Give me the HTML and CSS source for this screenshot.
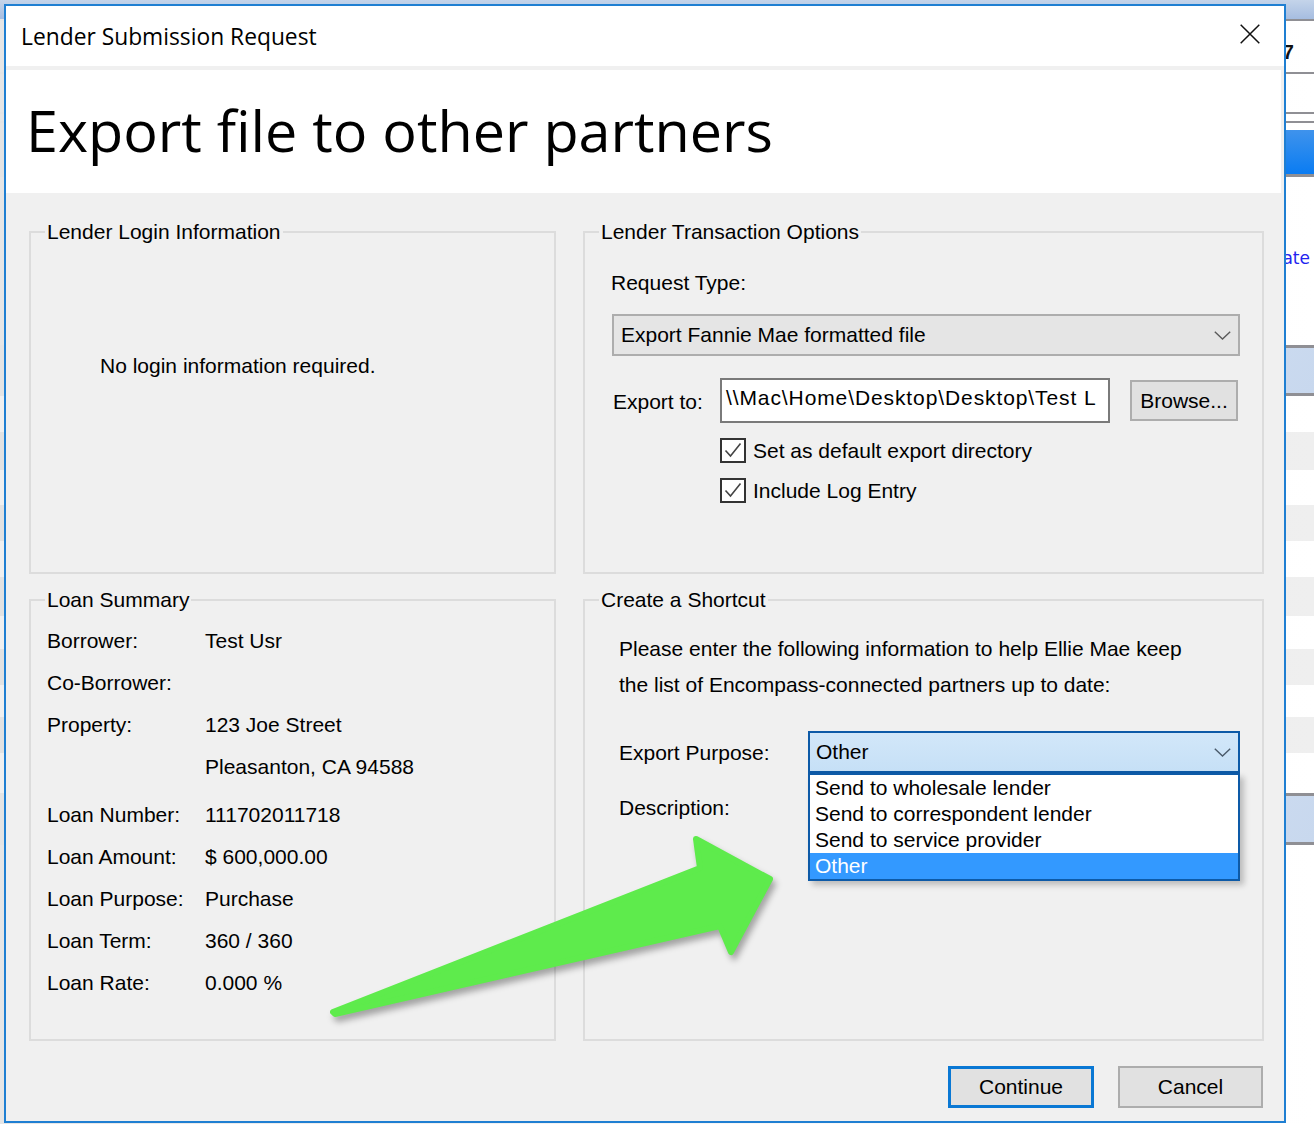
FILE: index.html
```html
<!DOCTYPE html>
<html lang="en">
<head>
<meta charset="utf-8">
<title>Lender Submission Request</title>
<link rel="stylesheet" href="styles.css">
</head>
<body>
<div class="desktop">
  <div class="st st-top"></div>
  <div class="st st-line h2"></div>
  <div class="st st-light h51 st-text-a"><span class="bg-num">2017</span></div>
  <div class="st st-line h2"></div>
  <div class="st st-light h38"></div>
  <div class="st st-line h2"></div>
  <div class="st st-light h7"></div>
  <div class="st st-line h2"></div>
  <div class="st st-light h7"></div>
  <div class="st st-blue h44"></div>
  <div class="st st-line h3"></div>
  <div class="st st-light h168 st-text-b"><span class="bg-link">Update</span></div>
  <div class="st st-line h3"></div>
  <div class="st st-lblue h45"></div>
  <div class="st st-line h3"></div>
  <div class="st st-w h36"></div>
  <div class="st st-g h38"></div>
  <div class="st st-w h35"></div>
  <div class="st st-g h36"></div>
  <div class="st st-w h36"></div>
  <div class="st st-g h39"></div>
  <div class="st st-w h33"></div>
  <div class="st st-g h36"></div>
  <div class="st st-w h32"></div>
  <div class="st st-g h36"></div>
  <div class="st st-w h40"></div>
  <div class="st st-line h3"></div>
  <div class="st st-lblue h46"></div>
  <div class="st st-line h3"></div>
  <div class="st st-light st-fill"></div>
</div>

<div class="dialog">
  <div class="titlebar">
    <span class="title-text">Lender Submission Request</span>
    <svg class="close" width="20" height="20" viewBox="0 0 20 20"><path d="M0.7 0.7 L19.3 19.3 M19.3 0.7 L0.7 19.3" stroke="#111" stroke-width="1.5" fill="none"/></svg>
  </div>
  <div class="header">Export file to other partners</div>

  <div class="content">
    <div class="groups">
      <fieldset class="group row1">
        <legend>Lender Login Information</legend>
        <div class="nologin">No login information required.</div>
      </fieldset>

      <fieldset class="group row1">
        <legend>Lender Transaction Options</legend>
        <div class="req-label">Request Type:</div>
        <div class="select-req">
          <span>Export Fannie Mae formatted file</span>
          <svg class="chev" width="17" height="9" viewBox="0 0 17 9"><path d="M0.8 0.8 L8.5 8 L16.2 0.8" stroke="#5a5a5a" stroke-width="1.4" fill="none"/></svg>
        </div>
        <div class="export-row">
          <span class="export-label">Export to:</span>
          <div class="textbox">\\Mac\Home\Desktop\Desktop\Test L</div>
          <div class="btn browse">Browse...</div>
        </div>
        <div class="check-row">
          <span class="checkbox"><svg width="22" height="21" viewBox="0 0 22 21"><path d="M3.5 10.5 L8.5 16 L18.5 3.5" stroke="#444" stroke-width="1.6" fill="none"/></svg></span>
          <span>Set as default export directory</span>
        </div>
        <div class="check-row">
          <span class="checkbox"><svg width="22" height="21" viewBox="0 0 22 21"><path d="M3.5 10.5 L8.5 16 L18.5 3.5" stroke="#444" stroke-width="1.6" fill="none"/></svg></span>
          <span>Include Log Entry</span>
        </div>
      </fieldset>

      <fieldset class="group row2">
        <legend>Loan Summary</legend>
        <div class="summary">
          <div class="k">Borrower:</div><div class="v">Test Usr</div>
          <div class="k">Co-Borrower:</div><div class="v"></div>
          <div class="k">Property:</div><div class="v">123 Joe Street</div>
          <div class="k"></div><div class="v">Pleasanton, CA 94588</div>
          <div class="k sp">Loan Number:</div><div class="v sp">111702011718</div>
          <div class="k">Loan Amount:</div><div class="v">$ 600,000.00</div>
          <div class="k">Loan Purpose:</div><div class="v">Purchase</div>
          <div class="k">Loan Term:</div><div class="v">360 / 360</div>
          <div class="k">Loan Rate:</div><div class="v">0.000 %</div>
        </div>
      </fieldset>

      <fieldset class="group row2">
        <legend>Create a Shortcut</legend>
        <div class="intro">Please enter the following information to help Ellie Mae keep<br>the list of Encompass-connected partners up to date:</div>
        <div class="purpose-row">
          <span class="purpose-label">Export Purpose:</span>
          <div class="combo">
            <div class="combo-box">
              <span>Other</span>
              <svg class="chev" width="17" height="9" viewBox="0 0 17 9"><path d="M0.8 0.8 L8.5 8 L16.2 0.8" stroke="#4a5a6a" stroke-width="1.4" fill="none"/></svg>
            </div>
            <ul class="combo-list">
              <li>Send to wholesale lender</li>
              <li>Send to correspondent lender</li>
              <li>Send to service provider</li>
              <li class="selected">Other</li>
            </ul>
          </div>
        </div>
        <div class="desc-label">Description:</div>
      </fieldset>
    </div>

    <div class="buttons">
      <div class="btn btn-primary">Continue</div>
      <div class="btn btn-cancel">Cancel</div>
    </div>
  </div>
</div>

<svg class="arrow" width="1314" height="1124" viewBox="0 0 1314 1124">
  <polygon points="333,1012 700,868 696,839 770,879 731,952 720,926 335,1014" fill="#5eeb4c" stroke="#5eeb4c" stroke-width="6" stroke-linejoin="round"/>
</svg>
</body>
</html>
```

FILE: styles.css
```css
html, body {
  margin: 0;
  padding: 0;
}

body {
  width: 1314px;
  height: 1124px;
  overflow: hidden;
  position: relative;
  font-family: "Liberation Sans", Arial, sans-serif;
  font-size: 21px;
  color: #000;
  background: #eeeeee;
}

/* background application behind the dialog */
.desktop {
  display: flex;
  flex-direction: column;
  height: 1124px;
}

.st { flex: none; }
.st-fill { flex: 1; }
.h2 { height: 2px; }
.h3 { height: 3px; }
.h7 { height: 7px; }
.h32 { height: 32px; }
.h33 { height: 33px; }
.h35 { height: 35px; }
.h36 { height: 36px; }
.h38 { height: 38px; }
.h39 { height: 39px; }
.h40 { height: 40px; }
.h44 { height: 44px; }
.h45 { height: 45px; }
.h46 { height: 46px; }
.h51 { height: 51px; }
.h168 { height: 168px; }

.st-top {
  height: 19px;
  background: linear-gradient(#c4d4ea, #a6bde0);
}
.st-line {
  background:
    linear-gradient(to right, #e4e4e4 0, #e4e4e4 12px, transparent 12px),
    #8f8f94;
}
.st-light { background: linear-gradient(to right, #e6e6e6, #f8f8f8 60%, #ffffff); }
.st-w { background: linear-gradient(to right, #f0f0f0, #ffffff); }
.st-g { background: linear-gradient(to right, #e2e2e2, #efefef); }
.st-blue {
  background:
    linear-gradient(to right, #e4e4e4 0, #e4e4e4 12px, transparent 12px),
    linear-gradient(#3f93ec, #0a7cf2);
}
.st-lblue {
  background:
    linear-gradient(to right, #e4e4e4 0, #e4e4e4 12px, transparent 12px),
    linear-gradient(135deg, #eef4fd, #c8d8ee);
}

.st-text-a {
  box-sizing: border-box;
  display: flex;
  justify-content: flex-end;
  align-items: center;
  padding: 12px 20px 0 0;
}
.bg-num {
  font-weight: bold;
  font-size: 20px;
  color: #111;
}
.st-text-b {
  box-sizing: border-box;
  display: flex;
  justify-content: flex-end;
  align-items: flex-start;
  padding: 70px 4px 0 0;
}
.bg-link {
  font-family: "DejaVu Sans", sans-serif;
  font-size: 17px;
  line-height: 22px;
  color: #2323f0;
}

/* dialog window */
.dialog {
  position: absolute;
  left: 4px;
  top: 4px;
  width: 1282px;
  height: 1119px;
  box-sizing: border-box;
  border: 2px solid #1f7fd2;
  background: #f0f0f0;
  display: flex;
  flex-direction: column;
}

.titlebar {
  height: 60px;
  flex: none;
  background: #ffffff;
  display: flex;
  align-items: center;
  justify-content: space-between;
  padding: 0 24px 0 15px;
}
.title-text {
  font-family: "Open Sans", "Noto Sans", sans-serif;
  font-size: 22.8px;
  color: #000;
}
.close { display: block; margin-top: -4px; }

.header {
  flex: none;
  height: 123px;
  box-sizing: border-box;
  margin: 4px 3px 0 0;
  padding: 22px 0 0 20px;
  background: #ffffff;
  font-family: "Open Sans", "Noto Sans", sans-serif;
  font-size: 57.5px;
  line-height: 76px;
  white-space: nowrap;
}

.content {
  padding: 27px 20px 0 23px;
}

.groups {
  display: grid;
  grid-template-columns: 527px 681px;
  column-gap: 27px;
  row-gap: 14px;
}

.group {
  margin: 0;
  min-width: 0;
  box-sizing: border-box;
  border: 2px solid #dcdcdc;
  padding: 0 10px 0 16px;
  line-height: 24px;
}
.group legend {
  padding: 0 2px;
  margin-left: -2px;
  line-height: 24px;
}
.row1 { height: 354px; }
.row2 { height: 453px; }

.nologin {
  margin: 110px 0 0 53px;
}

.req-label {
  margin: 27px 0 0 10px;
}

.select-req {
  margin: 19px 0 0 11px;
  width: 628px;
  height: 42px;
  box-sizing: border-box;
  border: 2px solid #adadad;
  background: #e5e5e5;
  display: flex;
  align-items: center;
  justify-content: space-between;
  padding: 0 7px 0 7px;
}
.chev { display: block; }

.export-row {
  display: flex;
  align-items: center;
  height: 45px;
  margin-top: 22px;
}
.export-label {
  width: 107px;
  margin-left: 12px;
  padding-top: 2px;
}
.textbox {
  width: 390px;
  height: 45px;
  box-sizing: border-box;
  border: 2px solid #7a7a7a;
  background: #ffffff;
  padding: 6px 0 0 4px;
  white-space: nowrap;
  overflow: hidden;
  letter-spacing: 0.9px;
}

.btn {
  box-sizing: border-box;
  background: #e1e1e1;
  display: flex;
  align-items: center;
  justify-content: center;
}
.browse {
  margin-left: 20px;
  width: 108px;
  height: 41px;
  border: 2px solid #adadad;
}

.check-row {
  display: flex;
  align-items: center;
  gap: 7px;
  height: 25px;
  margin: 15px 0 0 119px;
}
.checkbox {
  width: 26px;
  height: 25px;
  box-sizing: border-box;
  border: 2px solid #333333;
  background: #ffffff;
  display: flex;
}
.checkbox svg { display: block; }

.summary {
  display: grid;
  grid-template-columns: 158px auto;
  margin-top: 8px;
}
.summary .k,
.summary .v {
  height: 42px;
  line-height: 42px;
  white-space: nowrap;
}
.summary .sp { margin-top: 6px; }

.intro {
  margin: 19px 0 0 18px;
  line-height: 36px;
  white-space: nowrap;
}

.purpose-row {
  display: flex;
  align-items: center;
  margin: 28px 0 0 18px;
}
.purpose-label {
  width: 189px;
  padding-top: 2px;
}
.combo {
  position: relative;
  width: 432px;
}
.combo-box {
  height: 42px;
  box-sizing: border-box;
  border: 2px solid #0d5aa7;
  background: linear-gradient(#d2e7f9, #c6e0f6);
  display: flex;
  align-items: center;
  justify-content: space-between;
  padding: 0 7px 0 6px;
}
.combo-list {
  position: absolute;
  top: 100%;
  left: 0;
  width: 432px;
  box-sizing: border-box;
  margin: 0;
  padding: 0;
  list-style: none;
  background: #ffffff;
  border: 2px solid #0d5aa7;
  box-shadow: 4px 4px 6px rgba(0, 0, 0, 0.22);
  z-index: 2;
}
.combo-list li {
  height: 26px;
  line-height: 26px;
  padding-left: 5px;
  white-space: nowrap;
}
.combo-list li.selected {
  background: #3399ff;
  color: #ffffff;
}

.desc-label {
  margin: 23px 0 0 18px;
}

.buttons {
  display: flex;
  justify-content: flex-end;
  gap: 24px;
  margin: 25px 1px 0 0;
}
.btn-primary {
  width: 146px;
  height: 42px;
  border: 3px solid #0a78d4;
}
.btn-cancel {
  width: 145px;
  height: 42px;
  border: 2px solid #adadad;
}

/* annotation arrow drawn over the screenshot */
.arrow {
  position: absolute;
  left: 0;
  top: 0;
  pointer-events: none;
  filter: drop-shadow(3px 5px 3px rgba(0, 0, 0, 0.32));
  z-index: 5;
}
```
